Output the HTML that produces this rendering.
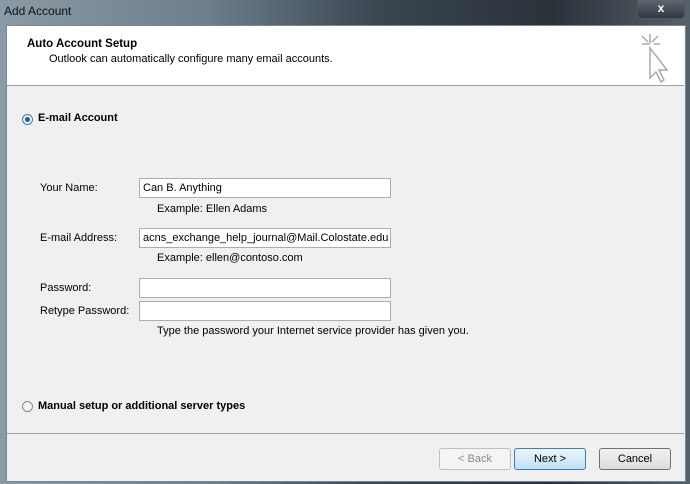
<!DOCTYPE html><html><head><style>
body{margin:0;width:690px;height:484px;overflow:hidden;font-family:"Liberation Sans",sans-serif;font-size:11px;color:#000;position:relative;background:linear-gradient(90deg,#8a9aa6 0%,#6d7e8c 30%,#3a4650 55%,#2a3139 80%,#55616b 100%)}
.a{position:absolute}
.inp{position:absolute;left:139px;width:250px;height:18px;border:1px solid #abadb3;background:#fff;font-size:11px;line-height:18px;padding-left:3px;box-sizing:border-box;width:252px;height:20px;overflow:hidden;white-space:nowrap}
.btn{position:absolute;top:448px;height:22px;border:1px solid #707070;border-radius:3px;background:linear-gradient(#f2f2f2,#dcdcdc);box-sizing:border-box;text-align:center;line-height:20px;font-size:11px}
.radio{position:absolute;width:11px;height:11px;border-radius:50%;border:1px solid #8a8a8a;background:#f4f4f4;box-sizing:border-box}
</style></head><body>
<div class="a" style="left:4px;top:4px;font-size:12px;color:#111">Add Account</div>
<div class="a" style="left:637px;top:0;width:46px;height:18px;border:1px solid #555;border-top:0;border-radius:0 0 4px 4px;background:linear-gradient(#5d6770,#2f3840);color:#fff;text-align:center;font-weight:bold;font-size:12px;line-height:16px">x</div>
<div class="a" style="left:6px;top:25px;width:678px;height:455px;background:#f0f0f0;border:1px solid #7b8790"></div>
<div class="a" style="left:7px;top:26px;width:677px;height:59px;background:#fff;border-bottom:1px solid #a0a0a0"></div>
<div class="a" style="left:27px;top:38px;font-weight:bold;font-size:11.5px">Auto Account Setup</div>
<div class="a" style="left:49px;top:53px">Outlook can automatically configure many email accounts.</div>
<svg class="a" style="left:632px;top:30px" width="40" height="54"><g stroke="#aaa" stroke-width="1.5" fill="none"><path d="M18 4v9M10 14h8M26 6l-6 6M10 6l6 6M28 14h-6"/><path d="M18 18v30l6-6 5 10 3-2-5-10h8z" fill="#fff"/></g></svg>
<div class="radio" style="left:22px;top:114px;border-color:#3c7fb1"><div style="position:absolute;left:2px;top:2px;width:5px;height:5px;border-radius:50%;background:#1f5f9b"></div></div>
<div class="a" style="left:38px;top:112px;font-weight:bold">E-mail Account</div>
<div class="a" style="left:40px;top:182px">Your Name:</div>
<div class="inp" style="top:178px">Can B. Anything</div>
<div class="a" style="left:157px;top:203px">Example: Ellen Adams</div>
<div class="a" style="left:40px;top:232px">E-mail Address:</div>
<div class="inp" style="top:228px">acns_exchange_help_journal@Mail.Colostate.edu</div>
<div class="a" style="left:157px;top:252px">Example: ellen@contoso.com</div>
<div class="a" style="left:40px;top:282px">Password:</div>
<div class="inp" style="top:278px"></div>
<div class="a" style="left:40px;top:305px">Retype Password:</div>
<div class="inp" style="top:301px"></div>
<div class="a" style="left:157px;top:325px">Type the password your Internet service provider has given you.</div>
<div class="radio" style="left:22px;top:401px"></div>
<div class="a" style="left:38px;top:400px;font-weight:bold">Manual setup or additional server types</div>
<div class="a" style="left:7px;top:433px;width:677px;border-top:1px solid #a0a0a0"></div>
<div class="btn" style="left:439px;width:72px;border-color:#c0c0c0;color:#8a8a8a;background:#f4f4f4">&lt; Back</div>
<div class="btn" style="left:514px;width:72px;border-color:#3c7fb1;background:linear-gradient(#eaf6fd,#bfe2f6)">Next &gt;</div>
<div class="btn" style="left:599px;width:72px">Cancel</div>
</body></html>
